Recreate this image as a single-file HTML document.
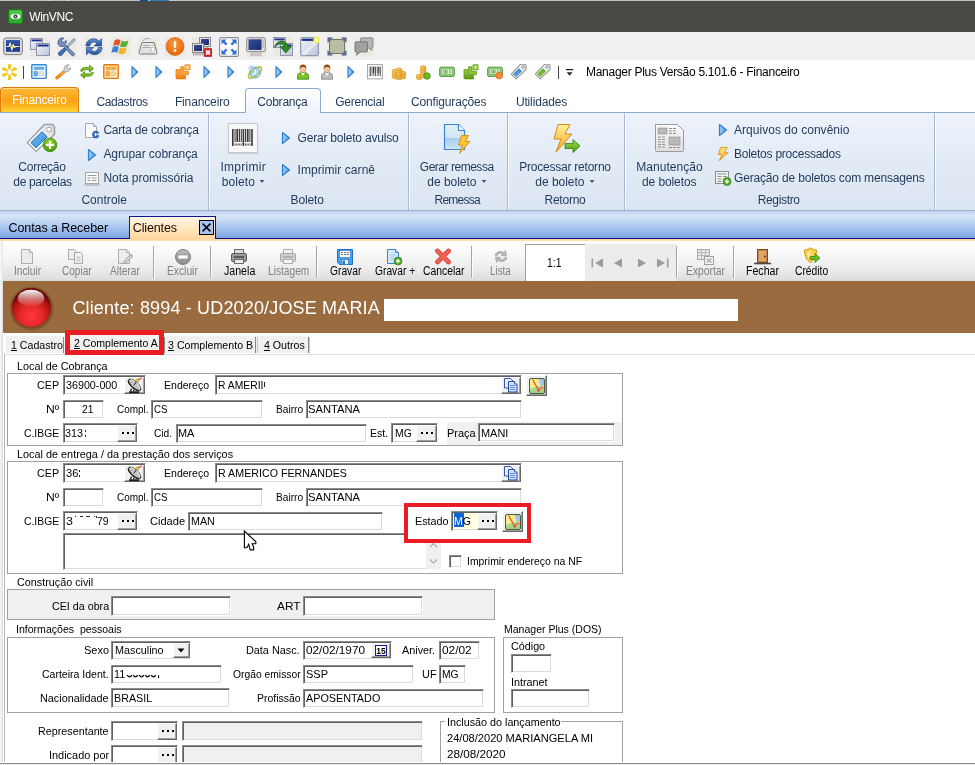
<!DOCTYPE html>
<html><head><meta charset="utf-8"><title>WinVNC</title>
<style>
html,body{margin:0;padding:0;background:#fff;}
body{width:975px;height:765px;overflow:hidden;font-family:"Liberation Sans",sans-serif;}
#root{position:relative;width:975px;height:765px;overflow:hidden;background:transparent;will-change:transform;}
#root div,#root svg{position:absolute;box-sizing:border-box;}
.t{white-space:pre;color:#000;}
.f{font-size:11px;line-height:13px;}
.r{font-size:12px;line-height:14px;color:#1e395b;}
.tb{font-size:11px;line-height:13px;}
.dis{color:#808080;}
.inp{background:#fff;border:1px solid;border-color:#8c8c8c #fff #fff #8c8c8c;box-shadow:inset 1px 1px 0 #5f5f5f, inset -1px -1px 0 #dcdcdc;}
.btn{background:#f0f0f0;border:1px solid;border-color:#fff #696969 #696969 #fff;box-shadow:inset -1px -1px 0 #a0a0a0;}
.grp{border:1px solid #a0a0a0;}

</style></head>
<body>
<div id="root">
<div style="left:0px;top:0px;width:975px;height:32px;background:#4a4946;"></div>
<div style="left:0px;top:0px;width:975px;height:1px;background:#c2c2c2;"></div>
<div style="left:49px;top:0px;width:1px;height:1px;background:#f4f4f4;"></div>
<div style="left:67px;top:0px;width:1px;height:1px;background:#f4f4f4;"></div>
<div style="left:140px;top:0px;width:8px;height:1px;background:#0f4f8f;"></div>
<div style="left:150px;top:0px;width:19px;height:1px;background:#2f7fb4;"></div>
<div class="t " style="left:29.2px;top:9px;letter-spacing:-0.334px;font-size:12px;line-height:16px;color:#fff;">WinVNC</div>
<svg style="left:8px;top:9px;" width="15" height="15" viewBox="0 0 15 15"><rect x="0.5" y="0.5" width="14" height="14" rx="2" fill="#2fae2f" stroke="#1d7a1d"/><rect x="1.5" y="1.5" width="12" height="6" rx="1.5" fill="#5fd35f" opacity=".6"/><ellipse cx="7.5" cy="7.5" rx="5" ry="2.8" fill="#f4f4f4"/><circle cx="7.5" cy="7.5" r="2" fill="#333"/><circle cx="7.5" cy="7.5" r="0.8" fill="#ddd"/></svg>
<div style="left:0px;top:32px;width:975px;height:28px;background:#f0f0f0;"></div>
<svg width="0" height="0" style="left:0;top:0"><defs>
<linearGradient id="vw" x1="0" y1="0" x2="1" y2="1"><stop offset="0" stop-color="#f4f6fb"/><stop offset="1" stop-color="#b9c2d8"/></linearGradient>
<linearGradient id="vs" x1="0" y1="0" x2="1" y2="1"><stop offset="0" stop-color="#3a4f9a"/><stop offset="1" stop-color="#1a2a6a"/></linearGradient>
<linearGradient id="vb" x1="0" y1="0" x2="0" y2="1"><stop offset="0" stop-color="#6590cf"/><stop offset="1" stop-color="#234f9a"/></linearGradient>
<radialGradient id="vo" cx="45%" cy="35%" r="65%"><stop offset="0" stop-color="#ff9a3a"/><stop offset="1" stop-color="#e2650a"/></radialGradient>
</defs></svg>
<div style="left:3px;top:37px;width:20px;height:20px;background:#eceae3;"></div>
<svg style="left:3px;top:37px;" width="20" height="20" viewBox="0 0 20 20"><rect x="0.7" y="1" width="18.6" height="16.6" rx="2.5" fill="#dcdcdc" stroke="#7d7d7d"/><rect x="3" y="3.2" width="14" height="11.6" fill="#1f3f94"/><rect x="3" y="3.2" width="14" height="4" fill="#3a5ab0" opacity=".6"/><path d="M3.5 9.5 H6 L7.2 6 L8.8 13 L10.3 7.5 L11.3 10.5 L12.3 9.5 H16.5" stroke="#f6f2a0" stroke-width="1.2" fill="none" stroke-linejoin="round"/></svg>
<div style="left:30px;top:37px;width:20px;height:20px;background:#eceae3;"></div>
<svg style="left:30px;top:37px;" width="20" height="20" viewBox="0 0 20 20"><rect x="0.5" y="1.5" width="12" height="11" fill="url(#vw)" stroke="#8d96ad"/><rect x="1.5" y="2.5" width="10" height="1.8" fill="#1c2f86"/><rect x="6.5" y="6.5" width="13" height="12" fill="url(#vw)" stroke="#8d96ad"/><rect x="7.5" y="7.5" width="11" height="2" fill="#1c2f86"/></svg>
<div style="left:57px;top:37px;width:20px;height:20px;background:#eceae3;"></div>
<svg style="left:57px;top:37px;" width="20" height="20" viewBox="0 0 20 20"><path d="M16.8 1.5 L18.3 3 L11 10.5 L9.5 9 Z" fill="#aab6cc" stroke="#5a6a8a" stroke-width="0.6"/><path d="M9.8 9 L11.2 10.4 L5 17.8 C4 18.8 2.6 18.8 1.9 18 C1.2 17.2 1.3 16 2.3 15 Z" fill="#3f6fc0" stroke="#1d3f86" stroke-width="0.8"/><path d="M2 2.5 C3.5 0.8 5.8 0.6 6.8 1.2 L4.6 3.4 L5.4 5 L7 5.4 L9 3.4 C9.6 4.6 9.4 6.6 7.8 7.8 L16.8 16 C17.6 16.8 17.6 17.8 17 18.4 C16.4 19 15.4 19 14.6 18.2 L6.2 9.2 C4.6 9.8 2.8 9.4 1.8 8.2 C0.8 7 0.8 4 2 2.5Z" fill="#7a92bc" stroke="#2f4f8f" stroke-width="0.8"/></svg>
<div style="left:84px;top:37px;width:20px;height:20px;background:#eceae3;"></div>
<svg style="left:84px;top:37px;" width="20" height="20" viewBox="0 0 20 20"><path d="M2 9 C2 4.5 6 1.5 10 1.8 C12.3 2 13.8 3 15 4.2 L17.5 1.8 V9 H10.2 L12.8 6.5 C12 5.6 11 5 9.8 5 C7.5 5 6 6.8 5.8 9 Z" fill="url(#vb)" stroke="#1f4a94" stroke-width="0.7"/><path d="M18 10.5 C18 15 14 18 10 17.7 C7.7 17.5 6.2 16.5 5 15.3 L2.5 17.7 V10.5 H9.8 L7.2 13 C8 13.9 9 14.5 10.2 14.5 C12.5 14.5 14 12.7 14.2 10.5 Z" fill="url(#vb)" stroke="#1f4a94" stroke-width="0.7"/></svg>
<div style="left:111px;top:37px;width:20px;height:20px;background:#eceae3;"></div>
<svg style="left:111px;top:37px;" width="20" height="20" viewBox="0 0 20 20"><path d="M3.5 3.5 C5.5 1.8 7.5 2 9.5 3.2 L8 9 C6 7.8 4 7.8 2 9.2 Z" fill="#e2552a"/><path d="M10.5 3.6 C12.5 4.8 15 5 17.5 3.2 L16 9 C13.5 10.6 11 10.4 9 9.4 Z" fill="#5fb03a"/><path d="M1.8 10.2 C3.8 8.8 5.8 8.8 7.8 10 L6.3 15.8 C4.3 14.6 2.3 14.6 0.3 16 Z" fill="#3d82d8"/><path d="M8.8 10.4 C10.8 11.4 13.3 11.6 15.8 10 L14.3 15.8 C11.8 17.6 9.3 17.4 7.3 16.2 Z" fill="#f0b42a"/></svg>
<div style="left:138px;top:37px;width:20px;height:20px;background:#eceae3;"></div>
<svg style="left:138px;top:37px;" width="20" height="20" viewBox="0 0 20 20"><path d="M5 4 C6 1.5 9 0.8 11.5 2" fill="none" stroke="#9a9a9a" stroke-width="0.9"/><path d="M4 5.5 H16 L19 15.5 C19 16.5 18.5 17 17.5 17 H2.5 C1.5 17 1 16.5 1 15.5 Z" fill="#e9e9e9" stroke="#7a7a7a"/><path d="M5 8.5h7M4.5 10.5h8" stroke="#a8a8a8" stroke-width="1.2"/><rect x="4" y="13" width="8" height="2" fill="#f8f8f8" stroke="#b0b0b0" stroke-width="0.5"/><rect x="13.2" y="7.2" width="2.6" height="2" fill="#e8d890"/><rect x="13.5" y="10.5" width="3" height="4.5" fill="#f8f8f8" stroke="#b0b0b0" stroke-width="0.5"/></svg>
<div style="left:165px;top:37px;width:20px;height:20px;background:#eceae3;"></div>
<svg style="left:165px;top:37px;" width="20" height="20" viewBox="0 0 20 20"><circle cx="10" cy="9.5" r="9" fill="url(#vo)" stroke="#d25a08" stroke-width="0.6"/><rect x="8.9" y="4" width="2.2" height="7" rx="1" fill="#fff"/><circle cx="10" cy="13.5" r="1.3" fill="#fff"/></svg>
<div style="left:192px;top:37px;width:20px;height:20px;background:#eceae3;"></div>
<svg style="left:192px;top:37px;" width="20" height="20" viewBox="0 0 20 20"><rect x="7.5" y="0.5" width="11" height="9" fill="#e4e4e4" stroke="#8a8a8a"/><rect x="9" y="2" width="8" height="6" fill="url(#vs)"/><rect x="10" y="10" width="6" height="1.5" fill="#c8c8c8"/><rect x="0.5" y="6.5" width="11" height="9" fill="#e4e4e4" stroke="#8a8a8a"/><rect x="2" y="8" width="8" height="6" fill="url(#vs)"/><rect x="1.5" y="16" width="9" height="2" fill="#d0d0d0" stroke="#8a8a8a" stroke-width="0.5"/><rect x="12" y="11.5" width="8" height="8" rx="1" fill="#d81e1e" stroke="#a01010" stroke-width="0.6"/><path d="M14 13.5l4 4M18 13.5l-4 4" stroke="#fff" stroke-width="1.8"/></svg>
<div style="left:219px;top:37px;width:20px;height:20px;background:#eceae3;"></div>
<svg style="left:219px;top:37px;" width="20" height="20" viewBox="0 0 20 20"><rect x="0.6" y="0.6" width="18.8" height="18.8" rx="1.5" fill="#fbfbfb" stroke="#8c8c8c" stroke-width="1.1"/><g fill="#2f6fd0"><path d="M2.5 2.5h5l-1.7 1.7l2.6 2.6l-1.6 1.6l-2.6-2.6l-1.7 1.7z"/><path d="M17.5 2.5v5l-1.7-1.7l-2.6 2.6l-1.6-1.6l2.6-2.6l-1.7-1.7z"/><path d="M2.5 17.5v-5l1.7 1.7l2.6-2.6l1.6 1.6l-2.6 2.6l1.7 1.7z"/><path d="M17.5 17.5h-5l1.7-1.7l-2.6-2.6l1.6-1.6l2.6 2.6l1.7-1.7z"/></g></svg>
<div style="left:246px;top:37px;width:20px;height:20px;background:#eceae3;"></div>
<svg style="left:246px;top:37px;" width="20" height="20" viewBox="0 0 20 20"><rect x="0.7" y="0.7" width="18.6" height="14" rx="1.5" fill="#e0e0e0" stroke="#8a8a8a"/><rect x="2.5" y="2.3" width="13" height="10.6" fill="url(#vs)"/><path d="M17 3v8" stroke="#aaa"/><path d="M6 15 h8 l1.5 3 h-11z" fill="#d4d4d4" stroke="#9a9a9a" stroke-width="0.6"/><ellipse cx="10" cy="18" rx="5.5" ry="1.3" fill="#c4c4c4"/></svg>
<div style="left:273px;top:37px;width:20px;height:20px;background:#eceae3;"></div>
<svg style="left:273px;top:37px;" width="20" height="20" viewBox="0 0 20 20"><rect x="0.5" y="0.5" width="12" height="10" fill="url(#vw)" stroke="#8d96ad"/><rect x="1.5" y="1.5" width="10" height="1.8" fill="#1c2f86"/><rect x="7.5" y="6.5" width="12" height="12" fill="url(#vw)" stroke="#8d96ad"/><rect x="13.5" y="7.5" width="5" height="1.8" fill="#1c2f86"/><path d="M1.5 10.5 C2.5 5.5 7 3.2 10.5 4.2 C13 5 14.5 7 14.8 9.5 H18.5 L12.8 16 L7 9.5 H10.8 C10.5 8 9.3 7 7.5 7 C5 7 3 8.5 1.5 10.5Z" fill="#2f8a2a" stroke="#1d5f1a" stroke-width="0.7"/></svg>
<div style="left:300px;top:37px;width:20px;height:20px;background:#eceae3;"></div>
<svg style="left:300px;top:37px;" width="20" height="20" viewBox="0 0 20 20"><rect x="0.7" y="0.7" width="17.6" height="18" rx="1" fill="url(#vw)" stroke="#7d8aa8"/><rect x="1.7" y="1.7" width="15.6" height="2.2" fill="#1c2f86"/><path d="M3 18 L16 5" stroke="#fff" stroke-width="3" opacity=".45"/><circle cx="16.5" cy="3" r="3.3" fill="#f8f05a" opacity=".95"/><circle cx="16.5" cy="3" r="1.6" fill="#fffcc0"/></svg>
<div style="left:327px;top:37px;width:20px;height:20px;background:#eceae3;"></div>
<svg style="left:327px;top:37px;" width="20" height="20" viewBox="0 0 20 20"><rect x="2.5" y="2.5" width="15" height="14" rx="2.5" fill="#b9bda4" stroke="#6f7466"/><g fill="#52688f"><path d="M0.5 0.5h5.5l-5.5 5.5z"/><path d="M19.5 0.5v5.5l-5.5-5.5z"/><path d="M0.5 18.5v-5.5l5.5 5.5z"/><path d="M19.5 18.5h-5.5l5.5-5.5z"/></g></svg>
<div style="left:354px;top:37px;width:20px;height:20px;background:#eceae3;"></div>
<svg style="left:354px;top:37px;" width="20" height="20" viewBox="0 0 20 20"><path d="M7.5 0.8 H18 a1 1 0 0 1 1 1 V10 a1 1 0 0 1 -1 1 h-1 l1.2 2.4 l-3.6-2.4 H7.5 a1 1 0 0 1 -1 -1 V1.8 a1 1 0 0 1 1 -1z" fill="#b4b8b4" stroke="#7a7e7a" stroke-width="0.8"/><path d="M2 4.8 H12.5 a1 1 0 0 1 1 1 V14 a1 1 0 0 1 -1 1 H6 l-3.4 3.2 l0.6-3.2 H2 a1 1 0 0 1 -1 -1 V5.8 a1 1 0 0 1 1 -1z" fill="#9ea29e" stroke="#6a6e6a" stroke-width="0.8"/></svg>
<div style="left:0px;top:60px;width:975px;height:28px;background:#fff;"></div>
<svg width="0" height="0" style="left:0;top:0"><defs>
<linearGradient id="qp" x1="0" y1="0" x2="1" y2="0"><stop offset="0" stop-color="#b5dcf8"/><stop offset="1" stop-color="#4a9be2"/></linearGradient>
<linearGradient id="qo" x1="0" y1="0" x2="0" y2="1"><stop offset="0" stop-color="#ffb347"/><stop offset="1" stop-color="#f27c0c"/></linearGradient>
<linearGradient id="qg" x1="0" y1="0" x2="0" y2="1"><stop offset="0" stop-color="#a4d63a"/><stop offset="1" stop-color="#5a9c12"/></linearGradient>
<linearGradient id="qc" x1="0" y1="0" x2="1" y2="0"><stop offset="0" stop-color="#ffd978"/><stop offset="1" stop-color="#f0a428"/></linearGradient>
<linearGradient id="qt" x1="0" y1="0" x2="1" y2="1"><stop offset="0" stop-color="#ffffff"/><stop offset="1" stop-color="#e2e2e2"/></linearGradient>
</defs></svg>
<svg style="left:1px;top:63px;" width="17" height="18" viewBox="0 0 17 18"><g transform="translate(8.5 9)"><path d="M-1 -2.2 L-1.7 -7.6 Q0 -8.6 1.7 -7.6 L1 -2.2 Z" fill="#f4c61a" transform="rotate(0)"/><path d="M-1 -2.2 L-1.7 -7.6 Q0 -8.6 1.7 -7.6 L1 -2.2 Z" fill="#f4c61a" transform="rotate(60)"/><path d="M-1 -2.2 L-1.7 -7.6 Q0 -8.6 1.7 -7.6 L1 -2.2 Z" fill="#f4c61a" transform="rotate(120)"/><path d="M-1 -2.2 L-1.7 -7.6 Q0 -8.6 1.7 -7.6 L1 -2.2 Z" fill="#f4c61a" transform="rotate(180)"/><path d="M-1 -2.2 L-1.7 -7.6 Q0 -8.6 1.7 -7.6 L1 -2.2 Z" fill="#f4c61a" transform="rotate(240)"/><path d="M-1 -2.2 L-1.7 -7.6 Q0 -8.6 1.7 -7.6 L1 -2.2 Z" fill="#f4c61a" transform="rotate(300)"/></g></svg>
<div style="left:23px;top:66px;width:1px;height:13px;background:#444;"></div>
<svg style="left:31px;top:64px;" width="16" height="16" viewBox="0 0 16 16"><rect x="0.8" y="0.8" width="14.4" height="13.6" rx="0.8" fill="#fff" stroke="#2f86d0" stroke-width="1.4"/><rect x="3" y="3" width="10" height="2.6" rx="0.6" fill="#6fb4ee" stroke="#2f86d0" stroke-width="0.5"/><rect x="3" y="7.3" width="3.4" height="4.8" rx="0.5" fill="#6fb4ee" stroke="#2f86d0" stroke-width="0.6"/><rect x="7.8" y="7.8" width="5" height="3.8" rx="0.4" fill="#e6e6e6" stroke="#b8b8b8" stroke-width="0.6"/></svg>
<svg style="left:55px;top:64px;" width="16" height="16" viewBox="0 0 16 16"><path d="M9 6.2 L10.8 8 L3.2 14.6 C2.4 15.3 1.3 15.2 0.9 14.6 C0.4 14 0.5 13 1.2 12.4 Z" fill="url(#qo)" stroke="#d8720c" stroke-width="0.7"/><path d="M9.3 5.8 C8.6 3.8 9.6 1.6 12 0.9 C12.8 0.7 13.6 0.8 14.2 1 L11.8 3 L12.2 4.6 L13.8 5 L15.6 3.2 C15.8 4.6 15.2 6.4 13.6 7.2 C12.8 7.6 11.8 7.6 11.2 7.4 L10.4 8.2 L8.6 6.4 Z" fill="#d6d6d6" stroke="#8c8c8c" stroke-width="0.7"/></svg>
<svg style="left:79px;top:64px;" width="16" height="16" viewBox="0 0 16 16"><path d="M1.5 7 C2 4.2 4.5 3.2 7 3.4 H10.5 V1.2 L14.5 4.6 L10.5 8 V5.8 H7 C5.2 5.8 4 6.2 3.4 7.4 Z" fill="url(#qg)" stroke="#4a8a10" stroke-width="0.7" stroke-linejoin="round"/><path d="M14.5 8.6 C14 11.4 11.5 12.4 9 12.2 H5.5 V14.4 L1.5 11 L5.5 7.6 V9.8 H9 C10.8 9.8 12 9.4 12.6 8.2 Z" fill="url(#qg)" stroke="#4a8a10" stroke-width="0.7" stroke-linejoin="round"/></svg>
<svg style="left:103px;top:64px;" width="16" height="16" viewBox="0 0 16 16"><rect x="0.8" y="0.8" width="14.4" height="13.6" rx="0.8" fill="#fff0c4" stroke="#e8740c" stroke-width="1.4"/><rect x="3" y="3" width="10" height="2.6" rx="0.6" fill="#fbb24a" stroke="#e8740c" stroke-width="0.5"/><rect x="3" y="7.3" width="3.4" height="4.8" rx="0.5" fill="#fbb24a" stroke="#e8740c" stroke-width="0.6"/><rect x="7.8" y="7.8" width="5" height="3.8" rx="0.4" fill="#fdd88a" stroke="#b8b8b8" stroke-width="0.6"/></svg>
<svg style="left:127px;top:64px;" width="16" height="16" viewBox="0 0 16 16"><path d="M5 2.6 L10.6 8 L5 13.4 Z" fill="url(#qp)" stroke="#2f7fd0" stroke-width="1.2" stroke-linejoin="round"/></svg>
<svg style="left:151px;top:64px;" width="16" height="16" viewBox="0 0 16 16"><path d="M5 2.6 L10.6 8 L5 13.4 Z" fill="url(#qp)" stroke="#2f7fd0" stroke-width="1.2" stroke-linejoin="round"/></svg>
<svg style="left:175px;top:64px;" width="16" height="16" viewBox="0 0 16 16"><path d="M1 5.5 h3.6 v6 h6 v3.4 h-8.6 a1 1 0 0 1 -1 -1z" fill="url(#qo)" stroke="#e8740c" stroke-width="0.7"/><path d="M5.6 2.8 h3.2 v4.6 h4.6 v3.2 h-7.8z" fill="#fba33a" stroke="#e8740c" stroke-width="0.7"/><rect x="10" y="0.8" width="5" height="5" fill="#fdc25a" stroke="#e8740c" stroke-width="0.7"/><rect x="11.5" y="2.3" width="2" height="2" fill="#ffe9b0"/></svg>
<svg style="left:199px;top:64px;" width="16" height="16" viewBox="0 0 16 16"><path d="M5 2.6 L10.6 8 L5 13.4 Z" fill="url(#qp)" stroke="#2f7fd0" stroke-width="1.2" stroke-linejoin="round"/></svg>
<svg style="left:223px;top:64px;" width="16" height="16" viewBox="0 0 16 16"><path d="M5 2.6 L10.6 8 L5 13.4 Z" fill="url(#qp)" stroke="#2f7fd0" stroke-width="1.2" stroke-linejoin="round"/></svg>
<svg style="left:247px;top:64px;" width="16" height="16" viewBox="0 0 16 16"><circle cx="8" cy="8.5" r="5.6" fill="#a9d4f6" stroke="#6aa6dc" stroke-width="0.8"/><path d="M4.5 6.5 C6 5 8 5.5 8.5 7 C9 8.5 7.5 10 6 10.5 M9.5 11 C10.5 10 11.5 10.5 11.5 11.5" fill="none" stroke="#fff" stroke-width="1.4"/><ellipse cx="8" cy="8.5" rx="8" ry="3.2" transform="rotate(-38 8 8.5)" fill="none" stroke="#7fb23a" stroke-width="1.3"/><path d="M1 3.5l1.2 1.5M3.2 2l0.6 1.8M5 1.5v1.6" stroke="#5a8ac8" stroke-width="0.7"/><ellipse cx="8" cy="8.5" rx="8" ry="3.2" transform="rotate(-38 8 8.5)" fill="none" stroke="#e8c84a" stroke-width="0.5"/></svg>
<svg style="left:271px;top:64px;" width="16" height="16" viewBox="0 0 16 16"><path d="M5 2.6 L10.6 8 L5 13.4 Z" fill="url(#qp)" stroke="#2f7fd0" stroke-width="1.2" stroke-linejoin="round"/></svg>
<svg style="left:295px;top:64px;" width="16" height="16" viewBox="0 0 16 16"><path d="M2.5 15.2 V11.5 C2.5 9.8 4.5 9 6 8.8 H10 C11.5 9 13.5 9.8 13.5 11.5 V15.2 Z" fill="#7cc22a" stroke="#3f8a12" stroke-width="0.8"/><path d="M6 9 L8 12 L10 9z" fill="#f4f9ea"/><ellipse cx="8" cy="5" rx="3.1" ry="3.6" fill="#f2c59a" stroke="#b07a4a" stroke-width="0.5"/><path d="M4.7 5 C4.3 2 6 0.6 8 0.6 C10 0.6 11.7 2 11.3 5 C10.8 3.6 9.6 3 8 3 C6.4 3 5.2 3.6 4.7 5z" fill="#8a4a1c"/></svg>
<svg style="left:319px;top:64px;" width="16" height="16" viewBox="0 0 16 16"><path d="M2.5 15.2 V11.5 C2.5 9.8 4.5 9 6 8.8 H10 C11.5 9 13.5 9.8 13.5 11.5 V15.2 Z" fill="#bdbdbd" stroke="#7d7d7d" stroke-width="0.8"/><path d="M6 9 L8 12 L10 9z" fill="#f4f4f4"/><ellipse cx="8" cy="5" rx="3.1" ry="3.6" fill="#f2c59a" stroke="#b07a4a" stroke-width="0.5"/><path d="M4.7 5 C4.3 2 6 0.6 8 0.6 C10 0.6 11.7 2 11.3 5 C10.8 3.6 9.6 3 8 3 C6.4 3 5.2 3.6 4.7 5z" fill="#8a4a1c"/></svg>
<svg style="left:343px;top:64px;" width="16" height="16" viewBox="0 0 16 16"><path d="M5 2.6 L10.6 8 L5 13.4 Z" fill="url(#qp)" stroke="#2f7fd0" stroke-width="1.2" stroke-linejoin="round"/></svg>
<svg style="left:367px;top:64px;" width="16" height="16" viewBox="0 0 16 16"><rect x="0.6" y="0.6" width="14.8" height="14.3" fill="#fdfdfd" stroke="#9a9a9a" stroke-width="0.9"/><g fill="#3a3a3a"><rect x="2.6" y="2.6" width="1.1" height="9.6"/><rect x="4.6" y="2.6" width="0.8" height="7"/><rect x="6" y="2.6" width="1.4" height="7"/><rect x="8.2" y="2.6" width="0.8" height="9.6"/><rect x="9.8" y="2.6" width="0.8" height="7"/><rect x="11.2" y="2.6" width="1.2" height="7"/><rect x="12.9" y="2.6" width="0.8" height="9.6"/></g><path d="M4.5 11h3M9.8 11h2.6" stroke="#444" stroke-width="1.6" stroke-dasharray="0.9 0.5"/></svg>
<svg style="left:391px;top:64px;" width="16" height="16" viewBox="0 0 16 16"><ellipse cx="4" cy="13.2" rx="3" ry="1.5" fill="url(#qc)" stroke="#d08a18" stroke-width="0.6"/><ellipse cx="4" cy="11.0" rx="3" ry="1.5" fill="url(#qc)" stroke="#d08a18" stroke-width="0.6"/><ellipse cx="4" cy="8.799999999999999" rx="3" ry="1.5" fill="url(#qc)" stroke="#d08a18" stroke-width="0.6"/><ellipse cx="4" cy="6.599999999999999" rx="3" ry="1.5" fill="url(#qc)" stroke="#d08a18" stroke-width="0.6"/><ellipse cx="11.8" cy="13.2" rx="3" ry="1.5" fill="url(#qc)" stroke="#d08a18" stroke-width="0.6"/><ellipse cx="11.8" cy="11.0" rx="3" ry="1.5" fill="url(#qc)" stroke="#d08a18" stroke-width="0.6"/><ellipse cx="11.8" cy="8.799999999999999" rx="3" ry="1.5" fill="url(#qc)" stroke="#d08a18" stroke-width="0.6"/><ellipse cx="8" cy="14.2" rx="3" ry="1.5" fill="url(#qc)" stroke="#d08a18" stroke-width="0.6"/><ellipse cx="8" cy="12.0" rx="3" ry="1.5" fill="url(#qc)" stroke="#d08a18" stroke-width="0.6"/><ellipse cx="8" cy="9.799999999999999" rx="3" ry="1.5" fill="url(#qc)" stroke="#d08a18" stroke-width="0.6"/><ellipse cx="8" cy="7.599999999999999" rx="3" ry="1.5" fill="url(#qc)" stroke="#d08a18" stroke-width="0.6"/><ellipse cx="8" cy="5.399999999999999" rx="3" ry="1.5" fill="url(#qc)" stroke="#d08a18" stroke-width="0.6"/></svg>
<svg style="left:415px;top:64px;" width="16" height="16" viewBox="0 0 16 16"><ellipse cx="4.2" cy="14.0" rx="3" ry="1.5" fill="url(#qc)" stroke="#d08a18" stroke-width="0.6"/><ellipse cx="4.2" cy="11.8" rx="3" ry="1.5" fill="url(#qc)" stroke="#d08a18" stroke-width="0.6"/><ellipse cx="8" cy="12.0" rx="3" ry="1.5" fill="url(#qc)" stroke="#d08a18" stroke-width="0.6"/><ellipse cx="8" cy="9.8" rx="3" ry="1.5" fill="url(#qc)" stroke="#d08a18" stroke-width="0.6"/><ellipse cx="8" cy="7.6" rx="3" ry="1.5" fill="url(#qc)" stroke="#d08a18" stroke-width="0.6"/><ellipse cx="8" cy="5.3999999999999995" rx="3" ry="1.5" fill="url(#qc)" stroke="#d08a18" stroke-width="0.6"/><ellipse cx="8" cy="3.1999999999999993" rx="3" ry="1.5" fill="url(#qc)" stroke="#d08a18" stroke-width="0.6"/><circle cx="12" cy="12" r="3.3" fill="#6ab81c" stroke="#3f8a12" stroke-width="0.7"/></svg>
<svg style="left:439px;top:64px;" width="16" height="16" viewBox="0 0 16 16"><rect x="0.7" y="3.2" width="14.6" height="9.2" rx="1.2" fill="#9ccf86" stroke="#4f9a3c" stroke-width="1"/><rect x="2.5" y="5" width="11" height="5.6" rx="0.6" fill="#d9efcf" stroke="#5aa448" stroke-width="0.6"/><path d="M5 6v3.6M8 6v3.6M11 6v3.6M6.5 6.3v3" stroke="#4f9a3c" stroke-width="0.9"/></svg>
<svg style="left:463px;top:64px;" width="16" height="16" viewBox="0 0 16 16"><path d="M1 5.5 h3.6 v6 h6 v3.4 h-8.6 a1 1 0 0 1 -1 -1z" fill="url(#qg)" stroke="#4a8a10" stroke-width="0.7"/><path d="M5.6 2.8 h3.2 v4.6 h4.6 v3.2 h-7.8z" fill="#8cc62a" stroke="#4a8a10" stroke-width="0.7"/><rect x="10" y="0.8" width="5" height="5" fill="#a8d84a" stroke="#4a8a10" stroke-width="0.7"/><rect x="11.5" y="2.3" width="2" height="2" fill="#dff0a8"/></svg>
<svg style="left:487px;top:64px;" width="16" height="16" viewBox="0 0 16 16"><rect x="0.7" y="3.2" width="14.6" height="9.2" rx="1.2" fill="#9ccf86" stroke="#4f9a3c" stroke-width="1"/><rect x="2.5" y="5" width="11" height="5.6" rx="0.6" fill="#d9efcf" stroke="#5aa448" stroke-width="0.6"/><path d="M5 6v3.6M8 6v3.6M11 6v3.6M6.5 6.3v3" stroke="#4f9a3c" stroke-width="0.9"/><circle cx="12.2" cy="11.6" r="3.4" fill="#f68a3a" stroke="#d8620c" stroke-width="0.7"/></svg>
<svg style="left:511px;top:64px;" width="16" height="16" viewBox="0 0 16 16"><g transform="translate(-3.7 -3.2) scale(0.54)"><path d="M7.3 24.6 L24.6 6.3 H32.7 L34.6 8.6 V16.2 L16.2 33.4 Z" fill="url(#qt)" stroke="#8f8f8f" stroke-width="1.9" stroke-linejoin="round"/><path d="M21.5 14.8 L26.2 19.4 L16.2 29 L11.6 24.4 Z" fill="#3f8fe0" stroke="#1f5fb0" stroke-width="1.2" stroke-linejoin="round"/><path d="M14 24 l4.5 4.5 M16.5 21.5 l4.5 4.5 M19 19 l4.5 4.5" stroke="#fff" stroke-width="0.7" opacity=".6"/><circle cx="29" cy="11.5" r="2.4" fill="#e8e8e8" stroke="#8a8a8a" stroke-width="1.4"/></g></svg>
<svg style="left:535px;top:64px;" width="16" height="16" viewBox="0 0 16 16"><g transform="translate(-3.7 -3.2) scale(0.54)"><path d="M7.3 24.6 L24.6 6.3 H32.7 L34.6 8.6 V16.2 L16.2 33.4 Z" fill="url(#qt)" stroke="#8f8f8f" stroke-width="1.9" stroke-linejoin="round"/><path d="M21.5 14.8 L26.2 19.4 L16.2 29 L11.6 24.4 Z" fill="#6ab81c" stroke="#3f8a12" stroke-width="1.2" stroke-linejoin="round"/><path d="M14 24 l4.5 4.5 M16.5 21.5 l4.5 4.5 M19 19 l4.5 4.5" stroke="#fff" stroke-width="0.7" opacity=".6"/><circle cx="29" cy="11.5" r="2.4" fill="#e8e8e8" stroke="#8a8a8a" stroke-width="1.4"/></g></svg>
<div style="left:558px;top:66px;width:1px;height:13px;background:#444;"></div>
<svg style="left:565px;top:66px;" width="10" height="11" viewBox="0 0 10 11"><path d="M1 3.6h7.2" stroke="#222" stroke-width="1.3"/><path d="M1.8 6.2h5.6L4.6 9.8z" fill="#222"/></svg>
<div class="t " style="left:586px;top:64.6px;letter-spacing:-0.283px;font-size:12px;line-height:14px;color:#000;">Manager Plus Versão 5.101.6 - Financeiro</div>
<div style="left:0px;top:88px;width:975px;height:25px;background:#fff;"></div>
<div style="left:0px;top:112px;width:975px;height:1px;background:#8eaad0;"></div>
<div style="left:0px;top:87px;width:79px;height:25px;border:1px solid #e07c0c;border-bottom:none;border-radius:4px 4px 0 0;background:linear-gradient(#fdb83a,#f9a314 50%,#fbb01c 70%,#ffd234);box-shadow:inset 0 1px 0 #ffd878, inset 1px 0 0 #fdbb45, inset -1px 0 0 #fdbb45;"></div>
<div class="t r" style="left:12.3px;top:92.6px;letter-spacing:-0.163px;color:#fff;">Financeiro</div>
<div class="t r" style="left:96.4px;top:94.6px;letter-spacing:-0.377px;">Cadastros</div>
<div class="t r" style="left:174.9px;top:94.6px;letter-spacing:-0.133px;">Financeiro</div>
<div class="t r" style="left:335.2px;top:94.6px;letter-spacing:-0.240px;">Gerencial</div>
<div class="t r" style="left:411px;top:94.6px;letter-spacing:-0.152px;">Configurações</div>
<div class="t r" style="left:515.9px;top:94.6px;letter-spacing:-0.149px;">Utilidades</div>
<div style="left:245px;top:88px;width:76px;height:25px;border:1px solid #8eaad0;border-bottom:none;border-radius:4px 4px 0 0;background:linear-gradient(#fdfeff,#eef3fb);"></div>
<div class="t r" style="left:257.3px;top:94.6px;letter-spacing:-0.229px;">Cobrança</div>
<div style="left:0px;top:113px;width:975px;height:97px;background:linear-gradient(#eef3fb,#e4ecf6 40%,#dbe5f1);"></div>
<div style="left:208px;top:113px;width:1px;height:97px;background:#a9bad4;"></div>
<div style="left:209px;top:113px;width:1px;height:97px;background:rgba(255,255,255,.75);"></div>
<div style="left:408px;top:113px;width:1px;height:97px;background:#a9bad4;"></div>
<div style="left:409px;top:113px;width:1px;height:97px;background:rgba(255,255,255,.75);"></div>
<div style="left:507px;top:113px;width:1px;height:97px;background:#a9bad4;"></div>
<div style="left:508px;top:113px;width:1px;height:97px;background:rgba(255,255,255,.75);"></div>
<div style="left:624px;top:113px;width:1px;height:97px;background:#a9bad4;"></div>
<div style="left:625px;top:113px;width:1px;height:97px;background:rgba(255,255,255,.75);"></div>
<div style="left:934px;top:113px;width:1px;height:97px;background:#a9bad4;"></div>
<div style="left:935px;top:113px;width:1px;height:97px;background:rgba(255,255,255,.75);"></div>
<svg style="left:20px;top:118px;" width="44" height="40" viewBox="0 0 44 40"><defs><linearGradient id="tg" x1="0" y1="1" x2="1" y2="0"><stop offset="0" stop-color="#ffffff"/><stop offset="0.6" stop-color="#f0f0f0"/><stop offset="1" stop-color="#cfcfcf"/></linearGradient>
    <linearGradient id="tb1" x1="0" y1="0" x2="1" y2="1"><stop offset="0" stop-color="#6bb6ea"/><stop offset="1" stop-color="#3f94d8"/></linearGradient>
    <radialGradient id="gp" cx="50%" cy="30%" r="75%"><stop offset="0" stop-color="#9ad62a"/><stop offset="1" stop-color="#3f9208"/></radialGradient></defs>
    <path d="M7.3 24.6 L24.6 6.3 H32.7 L34.6 8.6 V16.2 L16.2 33.4 Z" fill="url(#tg)" stroke="#9a9a9a" stroke-width="1.3" stroke-linejoin="round"/>
    <path d="M22 13.8 L27.2 18.8 L15.9 29.8 L11 24.6 Z" fill="url(#tb1)" stroke="#0f6cc4" stroke-width="1" stroke-linejoin="round"/>
    <circle cx="29" cy="11.5" r="2.3" fill="#fff" stroke="#a0a0a0" stroke-width="0.9"/>
    <circle cx="30" cy="26.9" r="6.8" fill="url(#gp)" stroke="#3f8a0a" stroke-width="0.8"/><path d="M30 22.8v8.2M25.9 26.9h8.2" stroke="#fff" stroke-width="2.2"/></svg>
<div class="t r" style="left:18.3px;top:160px;letter-spacing:-0.244px;">Correção</div>
<div class="t r" style="left:13.35px;top:175px;letter-spacing:-0.340px;">de parcelas</div>
<svg style="left:84px;top:123px;" width="17" height="16" viewBox="0 0 17 16"><path d="M1.5 0.5h8l3 3v11h-11z" fill="#fbfbfb" stroke="#a8a8a8"/><path d="M9.5 0.5v3h3" fill="#e8e8e8" stroke="#a8a8a8"/><text x="8" y="15" font-family="Liberation Sans" font-weight="bold" font-size="13" fill="#2a6fd0" stroke="#1a4fa8" stroke-width="0.5">c</text></svg>
<div class="t r" style="left:103.4px;top:122.5px;letter-spacing:-0.207px;">Carta de cobrança</div>
<svg style="left:86.5px;top:147.5px;" width="10" height="14" viewBox="0 0 10 14"><defs><linearGradient id="pg" x1="0" x2="1"><stop offset="0" stop-color="#9fd0f5"/><stop offset="1" stop-color="#4b9be0"/></linearGradient></defs><path d="M1.5 1.5 L8.5 7 L1.5 12.5 Z" fill="url(#pg)" stroke="#2f7fd0" stroke-width="1.2" stroke-linejoin="round"/></svg>
<div class="t r" style="left:103.4px;top:146.7px;letter-spacing:-0.068px;">Agrupar cobrança</div>
<svg style="left:84px;top:171px;" width="16" height="15" viewBox="0 0 16 15"><rect x="1.5" y="1.5" width="13" height="11" fill="#fbfbfb" stroke="#a8a8a8"/><path d="M3.5 4.5h9M3.5 7h3M8 7h4.5M3.5 9.5h3M8 9.5h4.5" stroke="#9a9a9a" stroke-width="1"/><path d="M0.5 14h15" stroke="#9a9a9a" stroke-width="1"/></svg>
<div class="t r" style="left:103.4px;top:171px;letter-spacing:-0.044px;">Nota promissória</div>
<div class="t r" style="left:81.4px;top:192.7px;letter-spacing:0.030px;">Controle</div>
<div style="left:228px;top:123px;width:30px;height:30px;background:#f7f7f7;border:1px solid #c9c9c9;box-shadow:0 1px 1px rgba(0,0,0,.12);"></div>
<svg style="left:228px;top:123px;" width="30" height="30" viewBox="0 0 30 30"><g fill="#3a3a3a"><rect x="4" y="6" width="1.6" height="17"/><rect x="6.6" y="6" width="1" height="13"/><rect x="8.4" y="6" width="1.8" height="13"/><rect x="11" y="6" width="1" height="13"/><rect x="12.8" y="6" width="1" height="13"/><rect x="14.6" y="6" width="1.6" height="17"/><rect x="17" y="6" width="1" height="13"/><rect x="18.8" y="6" width="1.8" height="13"/><rect x="21.4" y="6" width="1" height="13"/><rect x="23.2" y="6" width="1.6" height="17"/></g><path d="M6.5 21.5h7M17 21.5h5.5" stroke="#555" stroke-width="2" stroke-dasharray="1 0.6"/></svg>
<div class="t r" style="left:220.45px;top:160px;letter-spacing:0.272px;">Imprimir</div>
<div class="t r" style="left:221.8px;top:175px;letter-spacing:0.084px;">boleto</div>
<svg style="left:258.5px;top:179px;" width="6" height="5" viewBox="0 0 6 5"><path d="M0.5 1h5L3 4z" fill="#4a5a75"/></svg>
<svg style="left:281px;top:131px;" width="10" height="14" viewBox="0 0 10 14"><defs><linearGradient id="pg" x1="0" x2="1"><stop offset="0" stop-color="#9fd0f5"/><stop offset="1" stop-color="#4b9be0"/></linearGradient></defs><path d="M1.5 1.5 L8.5 7 L1.5 12.5 Z" fill="url(#pg)" stroke="#2f7fd0" stroke-width="1.2" stroke-linejoin="round"/></svg>
<div class="t r" style="left:297.6px;top:130.5px;letter-spacing:-0.207px;">Gerar boleto avulso</div>
<svg style="left:281px;top:163px;" width="10" height="14" viewBox="0 0 10 14"><defs><linearGradient id="pg" x1="0" x2="1"><stop offset="0" stop-color="#9fd0f5"/><stop offset="1" stop-color="#4b9be0"/></linearGradient></defs><path d="M1.5 1.5 L8.5 7 L1.5 12.5 Z" fill="url(#pg)" stroke="#2f7fd0" stroke-width="1.2" stroke-linejoin="round"/></svg>
<div class="t r" style="left:297.6px;top:162.8px;letter-spacing:0.059px;">Imprimir carnê</div>
<div class="t r" style="left:290.5px;top:192.7px;letter-spacing:-0.104px;">Boleto</div>
<svg style="left:441px;top:122.5px;" width="32" height="32" viewBox="0 0 32 32"><defs><linearGradient id="dg" x1="0" y1="0" x2="0" y2="1"><stop offset="0" stop-color="#e6f1fb"/><stop offset="0.55" stop-color="#cfe3f5"/><stop offset="0.56" stop-color="#a6cdee"/><stop offset="1" stop-color="#cfe5f7"/></linearGradient></defs>
    <path d="M3.5 1.5h14l6 6v19h-20z" fill="url(#dg)" stroke="#3a86d4" stroke-width="1.2"/><path d="M17.5 1.5v6h6" fill="#fff" stroke="#3a86d4" stroke-width="1.2"/>
    <path d="M20.5 12.5 H27.5 L24.5 18.5 H29 L18.5 30.5 L21.5 22 H17.5 Z" fill="#f9c535" stroke="#d98a10" stroke-width="0.9" stroke-linejoin="round"/></svg>
<div class="t r" style="left:419.8px;top:160px;letter-spacing:-0.479px;">Gerar remessa</div>
<div class="t r" style="left:427.3px;top:175px;letter-spacing:-0.020px;">de boleto</div>
<svg style="left:481px;top:179px;" width="6" height="5" viewBox="0 0 6 5"><path d="M0.5 1h5L3 4z" fill="#4a5a75"/></svg>
<div class="t r" style="left:434.55px;top:192.7px;letter-spacing:-0.769px;">Remessa</div>
<svg style="left:549.5px;top:122.5px;" width="32" height="32" viewBox="0 0 32 32"><defs><linearGradient id="bg2" x1="0" y1="0" x2="0" y2="1"><stop offset="0" stop-color="#fff0a0"/><stop offset="1" stop-color="#f3a318"/></linearGradient>
    <linearGradient id="ga" x1="0" y1="0" x2="0" y2="1"><stop offset="0" stop-color="#a6e04a"/><stop offset="1" stop-color="#4a9c12"/></linearGradient></defs>
    <path d="M8 1.5 H20 L15 11 H22 L6 29 L11 16 H4 Z" fill="url(#bg2)" stroke="#d98a10" stroke-width="1" stroke-linejoin="round"/>
    <path d="M15 20.5 h8 v-4 l7 6.5 l-7 6.5 v-4 h-8z" fill="url(#ga)" stroke="#3d8a10" stroke-width="0.9" stroke-linejoin="round"/></svg>
<div class="t r" style="left:519.2px;top:160px;letter-spacing:-0.222px;">Processar retorno</div>
<div class="t r" style="left:535.3px;top:175px;letter-spacing:-0.020px;">de boleto</div>
<svg style="left:589px;top:179px;" width="6" height="5" viewBox="0 0 6 5"><path d="M0.5 1h5L3 4z" fill="#4a5a75"/></svg>
<div class="t r" style="left:544.5px;top:192.7px;letter-spacing:-0.242px;">Retorno</div>
<svg style="left:653px;top:123px;" width="33" height="31" viewBox="0 0 33 31"><defs><linearGradient id="ng" x1="0" y1="0" x2="0" y2="1"><stop offset="0" stop-color="#fbfbfb"/><stop offset="1" stop-color="#dedede"/></linearGradient></defs>
    <path d="M2.5 1.5h22l6 6v20a1 1 0 0 1 -1 1h-26a1 1 0 0 1 -1 -1z" fill="url(#ng)" stroke="#9a9a9a"/>
    <rect x="5" y="5" width="9" height="6" fill="#b9b9b9" stroke="#8a8a8a" stroke-width="0.6"/><path d="M16 5.5h7M16 8h7M16 10.5h7M5 14h8M5 16.5h8M5 19h8M5 21.5h8M5 24h8" stroke="#8f8f8f" stroke-width="1.1" stroke-dasharray="3 1"/>
    <rect x="16" y="14" width="11" height="8" fill="#b9b9b9" stroke="#8a8a8a" stroke-width="0.6"/><path d="M16 24.5h11" stroke="#8f8f8f" stroke-width="1.1" stroke-dasharray="3 1"/></svg>
<div class="t r" style="left:636.35px;top:160px;letter-spacing:0.025px;">Manutenção</div>
<div class="t r" style="left:642px;top:175px;letter-spacing:-0.098px;">de boletos</div>
<svg style="left:718px;top:123px;" width="10" height="14" viewBox="0 0 10 14"><defs><linearGradient id="pg" x1="0" x2="1"><stop offset="0" stop-color="#9fd0f5"/><stop offset="1" stop-color="#4b9be0"/></linearGradient></defs><path d="M1.5 1.5 L8.5 7 L1.5 12.5 Z" fill="url(#pg)" stroke="#2f7fd0" stroke-width="1.2" stroke-linejoin="round"/></svg>
<div class="t r" style="left:734px;top:123px;letter-spacing:0.038px;">Arquivos do convênio</div>
<svg style="left:716px;top:146px;" width="15" height="16" viewBox="0 0 16 16"><defs><linearGradient id="bg1" x1="0" y1="0" x2="0" y2="1"><stop offset="0" stop-color="#ffe98a"/><stop offset="1" stop-color="#f5a81c"/></linearGradient></defs><path d="M5 1 H12 L9 6.5 H13 L3.5 15 L6.5 8.5 H2.5 Z" fill="url(#bg1)" stroke="#d98a10" stroke-width="0.8" stroke-linejoin="round"/></svg>
<div class="t r" style="left:734px;top:146.7px;letter-spacing:-0.247px;">Boletos processados</div>
<svg style="left:715px;top:170px;" width="17" height="16" viewBox="0 0 17 16"><rect x="0.5" y="1.5" width="13" height="12" fill="#f2f2f2" stroke="#8f8f8f"/><path d="M2.5 4h9M2.5 6.5h4M2.5 9h4M2.5 11.5h4M8 6.5h4" stroke="#8f8f8f" stroke-width="1.1"/><circle cx="12" cy="11.5" r="4" fill="#4aa81c" stroke="#2f7a10" stroke-width="0.6"/><path d="M12 9.3v4.4M9.8 11.5h4.4" stroke="#fff" stroke-width="1.3"/></svg>
<div class="t r" style="left:734px;top:170.8px;letter-spacing:-0.172px;">Geração de boletos com mensagens</div>
<div class="t r" style="left:757.7px;top:192.7px;letter-spacing:-0.336px;">Registro</div>
<div style="left:0px;top:210px;width:975px;height:1px;background:#a3b3cb;"></div>
<div style="left:0px;top:211px;width:975px;height:27px;background:linear-gradient(#bccfee,#d6e5f8 16%,#c4d9f5 36%,#9dbdec 70%,#7fa5e0);"></div>
<div style="left:0px;top:238px;width:975px;height:1px;background:#14148c;"></div>
<div style="left:0px;top:239px;width:975px;height:2px;background:linear-gradient(#fdd49a,#fde3bb);"></div>
<div style="left:0px;top:241px;width:975px;height:2px;background:#fdfdfd;"></div>
<div class="t " style="left:8.5px;top:221px;letter-spacing:-0.078px;font-size:12.5px;line-height:15px;color:#000;">Contas a Receber</div>
<div style="left:129px;top:216px;width:87px;height:23px;border:1px solid #14148c;border-bottom:none;background:linear-gradient(#fff6e6,#ffe6bd 55%,#fdd69c);"></div>
<div class="t " style="left:132.8px;top:221px;letter-spacing:-0.145px;font-size:12.5px;line-height:15px;color:#1a0a0a;">Clientes</div>
<div style="left:199px;top:220px;width:15px;height:15px;border:1px solid #000;background:#a9c4f0;"></div>
<svg style="left:199px;top:220px;" width="15" height="15" viewBox="0 0 15 15"><path d="M3.6 3.6 L11.4 11.4 M11.4 3.6 L3.6 11.4" stroke="#000" stroke-width="1.5"/></svg>
<div style="left:0px;top:243px;width:975px;height:38px;background:linear-gradient(#fefefe,#f6f6f6 35%,#ebebeb 70%,#dcdcdc);"></div>
<div style="left:0px;top:241px;width:3px;height:40px;background:linear-gradient(90deg,#fafafa,#e4e4e4);"></div>
<div style="left:153px;top:246px;width:1px;height:32px;background:#a6a6a6;"></div>
<div style="left:154px;top:246px;width:1px;height:32px;background:#fcfcfc;"></div>
<div style="left:210px;top:246px;width:1px;height:32px;background:#a6a6a6;"></div>
<div style="left:211px;top:246px;width:1px;height:32px;background:#fcfcfc;"></div>
<div style="left:316px;top:246px;width:1px;height:32px;background:#a6a6a6;"></div>
<div style="left:317px;top:246px;width:1px;height:32px;background:#fcfcfc;"></div>
<div style="left:471px;top:246px;width:1px;height:32px;background:#a6a6a6;"></div>
<div style="left:472px;top:246px;width:1px;height:32px;background:#fcfcfc;"></div>
<div style="left:676px;top:246px;width:1px;height:32px;background:#a6a6a6;"></div>
<div style="left:677px;top:246px;width:1px;height:32px;background:#fcfcfc;"></div>
<div style="left:733px;top:246px;width:1px;height:32px;background:#a6a6a6;"></div>
<div style="left:734px;top:246px;width:1px;height:32px;background:#fcfcfc;"></div>
<svg style="left:19px;top:247.6px;" width="16" height="17" viewBox="0 0 16 17"><path d="M2.5 1.5h8l3 3v11h-11z" fill="#ececec" stroke="#adadad"/><path d="M10.5 1.5v3h3" fill="#e4e4e4" stroke="#b0b0b0"/></svg>
<div class="t tb dis" style="left:13.5px;top:265.1px;font-size:12px;transform:scaleX(0.8466);transform-origin:0 0;">Incluir</div>
<svg style="left:67px;top:247.6px;" width="18" height="17" viewBox="0 0 18 17"><path d="M1.5 1.5h6l2 2v8h-8z" fill="#ececec" stroke="#adadad"/><path d="M7.5 4.5h6l2 2v9h-8z" fill="#f0f0f0" stroke="#a8a8a8"/><path d="M9.5 9h4M9.5 11h4M9.5 13h4" stroke="#c0c0c0"/></svg>
<div class="t tb dis" style="left:61.5px;top:265.1px;font-size:12px;transform:scaleX(0.8373);transform-origin:0 0;">Copiar</div>
<svg style="left:116px;top:247.6px;" width="18" height="17" viewBox="0 0 18 17"><path d="M2.5 1.5h8l3 3v11h-11z" fill="#ececec" stroke="#adadad"/><path d="M10.5 1.5v3h3" fill="#e4e4e4" stroke="#b0b0b0"/><path d="M8 13 L15 6 L17 8 L10 15 L7.5 15.5z" fill="#d0d0d0" stroke="#9a9a9a" stroke-width="0.8"/></svg>
<div class="t tb dis" style="left:110px;top:265.1px;font-size:12px;transform:scaleX(0.8431);transform-origin:0 0;">Alterar</div>
<svg style="left:174px;top:247.6px;" width="18" height="18" viewBox="0 0 18 18"><defs><linearGradient id="exg" x1="0" y1="0" x2="0" y2="1"><stop offset="0" stop-color="#bdbdbd"/><stop offset="1" stop-color="#8a8a8a"/></linearGradient></defs><circle cx="9" cy="9" r="7.5" fill="url(#exg)" stroke="#808080"/><rect x="4" y="7" width="10" height="4" rx="1" fill="#fff" stroke="#8a8a8a" stroke-width="0.6"/></svg>
<div class="t tb dis" style="left:167.4px;top:265.1px;font-size:12px;transform:scaleX(0.8554);transform-origin:0 0;">Excluir</div>
<svg style="left:230px;top:247.6px;" width="18" height="17" viewBox="0 0 18 17"><rect x="4.5" y="1.5" width="9" height="5" fill="#dcdcdc" stroke="#6a6a6a"/><rect x="1.5" y="5.5" width="15" height="8" rx="1.5" fill="#9a9a9a" stroke="#5c5c5c"/><rect x="4" y="8" width="10" height="2" fill="#5a5a5a"/><rect x="4.5" y="11.5" width="9" height="4" fill="#ececec" stroke="#6a6a6a"/></svg>
<div class="t tb" style="left:223.8px;top:265.1px;font-size:12px;transform:scaleX(0.8851);transform-origin:0 0;">Janela</div>
<svg style="left:279px;top:247.6px;" width="18" height="17" viewBox="0 0 18 17"><rect x="4.5" y="1.5" width="9" height="5" fill="#efefef" stroke="#b0b0b0"/><rect x="1.5" y="5.5" width="15" height="8" rx="1.5" fill="#cfcfcf" stroke="#a8a8a8"/><rect x="4" y="8" width="10" height="2" fill="#b0b0b0"/><rect x="4.5" y="11.5" width="9" height="4" fill="#f4f4f4" stroke="#b0b0b0"/></svg>
<div class="t tb dis" style="left:267.6px;top:265.1px;font-size:12px;transform:scaleX(0.8482);transform-origin:0 0;">Listagem</div>
<svg style="left:336px;top:247.6px;" width="18" height="18" viewBox="0 0 18 18"><path d="M1.5 1.5h15v15h-13l-2-2z" fill="#4aa3ee" stroke="#1f70c8"/><rect x="3.5" y="2.5" width="11" height="7" fill="#fafcff" stroke="#1f70c8" stroke-width="0.6"/><path d="M5 4.5h8M5 6.5h8" stroke="#777" stroke-width="1.2" stroke-dasharray="2 1"/><rect x="5.5" y="11.5" width="7" height="5" fill="#e8f0fb" stroke="#1a5fb0" stroke-width="0.6"/><rect x="6.5" y="12.5" width="2.5" height="3.5" fill="#2a78cc"/></svg>
<div class="t tb" style="left:329.6px;top:265.1px;font-size:12px;transform:scaleX(0.8534);transform-origin:0 0;">Gravar</div>
<svg style="left:385px;top:247.6px;" width="18" height="18" viewBox="0 0 18 18"><path d="M2.5 1.5h8l3 3v11h-11z" fill="#d6e8f9" stroke="#3a86d4"/><path d="M10.5 1.5v3h3" fill="#dcebfb" stroke="#3a86d4"/><path d="M4.5 7h6M4.5 9h6M4.5 11h4" stroke="#a9cdf2"/><circle cx="13" cy="13" r="4" fill="#4aa81c" stroke="#2f7a10" stroke-width="0.6"/><path d="M13 10.8v4.4M10.8 13h4.4" stroke="#fff" stroke-width="1.3"/></svg>
<div class="t tb" style="left:374.8px;top:265.1px;font-size:12px;transform:scaleX(0.8550);transform-origin:0 0;">Gravar +</div>
<svg style="left:434px;top:247.6px;" width="18" height="17" viewBox="0 0 18 17"><path d="M3.5 3 L14.5 14 M14.5 3 L3.5 14" stroke="#d63c2c" stroke-width="4.6" stroke-linecap="round"/><path d="M3.5 3 L14.5 14 M14.5 3 L3.5 14" stroke="#f06252" stroke-width="3.2" stroke-linecap="round"/></svg>
<div class="t tb" style="left:422.7px;top:265.1px;font-size:12px;transform:scaleX(0.8641);transform-origin:0 0;">Cancelar</div>
<svg style="left:492px;top:247.6px;" width="18" height="17" viewBox="0 0 18 17"><path d="M3 7 C4 3.5 9 2.5 12 4.5 L13.5 2.5 L14.5 8 L9 7.5 L10.8 5.8 C9 4.8 6 5 5.2 7.5 Z" fill="#b8b8b8" stroke="#9a9a9a" stroke-width="0.6"/><path d="M15 10 C14 13.5 9 14.5 6 12.5 L4.5 14.5 L3.5 9 L9 9.5 L7.2 11.2 C9 12.2 12 12 12.8 9.5 Z" fill="#b8b8b8" stroke="#9a9a9a" stroke-width="0.6"/></svg>
<div class="t tb dis" style="left:490.3px;top:265.1px;font-size:12px;transform:scaleX(0.8166);transform-origin:0 0;">Lista</div>
<div style="left:585px;top:244px;width:91px;height:37px;background:#ececec;"></div>
<div style="left:525px;top:244px;width:60px;height:37px;background:#fff;border-top:1px solid #a0a0a0;border-left:1px solid #a0a0a0;"></div>
<div class="t tb" style="left:547.2px;top:256.6px;font-size:12px;transform:scaleX(0.8632);transform-origin:0 0;">1:1</div>
<svg style="left:591px;top:257px;" width="13" height="12" viewBox="0 0 13 12"><rect x="0.5" y="1.5" width="1.6" height="9" fill="#9c9c9c"/><path d="M12 1.5 L4 6 L12 10.5z" fill="#9c9c9c"/></svg>
<svg style="left:613px;top:257px;" width="10" height="12" viewBox="0 0 10 12"><path d="M9 1.5 L1 6 L9 10.5z" fill="#9c9c9c"/></svg>
<svg style="left:637px;top:257px;" width="10" height="12" viewBox="0 0 10 12"><path d="M1 1.5 L9 6 L1 10.5z" fill="#9c9c9c"/></svg>
<svg style="left:656px;top:257px;" width="13" height="12" viewBox="0 0 13 12"><rect x="10.9" y="1.5" width="1.6" height="9" fill="#9c9c9c"/><path d="M1 1.5 L9 6 L1 10.5z" fill="#9c9c9c"/></svg>
<svg style="left:696px;top:247.6px;" width="19" height="18" viewBox="0 0 19 18"><rect x="1.5" y="1.5" width="12" height="10" fill="#e9e9e9" stroke="#a8a8a8"/><path d="M1.5 4.5h12M1.5 7.5h12M5.5 1.5v10M9.5 1.5v10" stroke="#b8b8b8"/><rect x="8.5" y="8.5" width="9" height="8" fill="#f2f2f2" stroke="#a0a0a0"/><path d="M10.5 10.5l5 4M15.5 10.5l-5 4" stroke="#a8a8a8" stroke-width="1.2"/></svg>
<div class="t tb dis" style="left:686.3px;top:265.1px;font-size:12px;transform:scaleX(0.8599);transform-origin:0 0;">Exportar</div>
<svg style="left:753px;top:247.6px;" width="19" height="18" viewBox="0 0 19 18"><rect x="4.5" y="1.5" width="10" height="13" fill="#c98545" stroke="#7a4a1c"/><rect x="6" y="3" width="7" height="10" fill="#dfa468"/><circle cx="12" cy="8.5" r="0.9" fill="#5a3210"/><path d="M1 15.5h17" stroke="#4a4a4a" stroke-width="1.6"/></svg>
<div class="t tb" style="left:746px;top:265.1px;font-size:12px;transform:scaleX(0.8836);transform-origin:0 0;">Fechar</div>
<svg style="left:802px;top:246.8px;" width="19" height="19" viewBox="0 0 19 19"><path d="M2.5 3 C5 3 7 2 8.5 0.8 C10 2 12 3 14.5 3 C14.5 10 12 13.5 8.5 15.5 C5 13.5 2.5 10 2.5 3z" fill="#f8cf4a" stroke="#d89a18"/><path d="M5 5 C6.5 4.8 7.5 4.2 8.5 3.5 L8.5 13 C6.5 11.5 5 9 5 5z" fill="#fde9a0"/><path d="M8 9.5h5v-3l5 4.5l-5 4.5v-3h-5z" fill="#6ac020" stroke="#3d8a10" stroke-width="0.8" stroke-linejoin="round"/></svg>
<div class="t tb" style="left:795.4px;top:265.1px;font-size:12px;transform:scaleX(0.8556);transform-origin:0 0;">Crédito</div>
<div style="left:0px;top:281px;width:975px;height:52px;background:#996b3e;"></div>
<div style="left:0px;top:281px;width:3px;height:52px;background:linear-gradient(90deg,#fafafa,#dcdcdc);"></div>
<svg style="left:8px;top:284px;" width="48" height="48" viewBox="0 0 48 48"><defs><radialGradient id="rb" cx="50%" cy="72%" r="62%"><stop offset="0" stop-color="#ff3838"/><stop offset="0.45" stop-color="#e62828"/><stop offset="0.8" stop-color="#b01414"/><stop offset="1" stop-color="#6e0606"/></radialGradient>
<linearGradient id="rg" x1="0" y1="0" x2="0" y2="1"><stop offset="0" stop-color="#fff" stop-opacity="0.98"/><stop offset="0.5" stop-color="#fff" stop-opacity="0.45"/><stop offset="1" stop-color="#fff" stop-opacity="0.03"/></linearGradient>
<radialGradient id="rs" cx="50%" cy="50%" r="50%"><stop offset="0.82" stop-color="#3a1a00" stop-opacity="0.45"/><stop offset="1" stop-color="#3a1a00" stop-opacity="0"/></radialGradient></defs>
<circle cx="23.6" cy="24.4" r="23" fill="url(#rs)"/>
<circle cx="23.4" cy="23.6" r="19.5" fill="url(#rb)"/>
<ellipse cx="23" cy="14.2" rx="13.2" ry="8.4" fill="url(#rg)"/></svg>
<div class="t " style="left:72.4px;top:296.6px;letter-spacing:0.162px;font-size:18px;line-height:22px;color:#fff;">Cliente: 8994 - UD2020/JOSE MARIA</div>
<div style="left:384px;top:299px;width:354px;height:22px;background:#fff;"></div>
<div style="left:0px;top:333px;width:975px;height:432px;background:#fff;"></div>
<div style="left:0px;top:333px;width:3px;height:432px;background:linear-gradient(90deg,#fafafa,#dcdcdc);"></div>
<div style="left:4px;top:354px;width:971px;height:1px;background:#dedede;"></div>
<div style="left:4px;top:354px;width:1px;height:409px;background:#b9b9b9;"></div>
<div style="left:6px;top:336px;width:304px;height:17px;background:#f0f0f0;"></div>
<div class="t f" style="left:10.6px;top:338.8px;font-size:11.5px;transform:scaleX(0.9226);transform-origin:0 0;"><u>1</u> Cadastro</div>
<div style="left:63px;top:337px;width:1px;height:16px;background:#8a8a8a;"></div>
<div style="left:65px;top:330px;width:99px;height:25px;border:5px solid #ea1c24;background:#f0f0f0;"></div>
<div class="t f" style="left:73.8px;top:336.8px;font-size:11.5px;transform:scaleX(0.9156);transform-origin:0 0;"><u>2</u> Complemento A</div>
<div style="left:164px;top:337px;width:1px;height:16px;background:#8a8a8a;"></div>
<div class="t f" style="left:167.9px;top:338.8px;font-size:11.5px;transform:scaleX(0.9245);transform-origin:0 0;"><u>3</u> Complemento B</div>
<div style="left:255px;top:337px;width:1px;height:16px;background:#8a8a8a;"></div>
<div style="left:257px;top:337px;width:1px;height:16px;background:#c8c8c8;"></div>
<div class="t f" style="left:263.8px;top:338.8px;font-size:11.5px;transform:scaleX(0.9229);transform-origin:0 0;"><u>4</u> Outros</div>
<div style="left:308px;top:337px;width:1px;height:16px;background:#8a8a8a;"></div>
<div style="left:309px;top:337px;width:1px;height:16px;background:#c8c8c8;"></div>
<div class="t f" style="left:16.9px;top:359.8px;font-size:11.5px;transform:scaleX(0.9385);transform-origin:0 0;">Local de Cobrança</div>
<div class="grp" style="left:7px;top:373px;width:616px;height:73px;"></div>
<div class="t f" style="left:36.9px;top:378.8px;font-size:11.5px;transform:scaleX(0.9346);transform-origin:0 0;">CEP</div>
<div class="inp" style="left:63px;top:375px;width:83px;height:20px;background:#fff;"></div>
<div class="t f" style="left:66.2px;top:378.8px;font-size:11.5px;transform:scaleX(0.9328);transform-origin:0 0;">36900-000</div>
<div class="btn" style="left:124px;top:377px;width:21px;height:17px;"></div>
<svg style="left:124px;top:377px;" width="21" height="17" viewBox="0 0 21 17"><g transform="rotate(42 10.5 8)"><ellipse cx="10.5" cy="8" rx="8" ry="3.4" fill="#c4c4c4" stroke="#1a1a1a" stroke-width="0.9"/><path d="M3.5 9.2 C7 11.5 14 11.5 17.5 9.2" fill="none" stroke="#1a1a1a" stroke-width="1.1"/><path d="M4 6.5 C8 5 13 5 17 6.5" fill="none" stroke="#e8e8e8" stroke-width="1"/></g><path d="M9.8 8.2 L13 4.2" stroke="#222" stroke-width="1"/><circle cx="13.3" cy="3.6" r="1.5" fill="#f6ea20" stroke="#5a5a20" stroke-width="0.5"/><path d="M14.3 2.8 L18 0.6" stroke="#f03030" stroke-width="1.1"/><path d="M7.5 11.5 L6.5 14.5 M9.5 12.5 L10 14.5" stroke="#222" stroke-width="1.3"/><path d="M5 15.2h10" stroke="#1a1a1a" stroke-width="1.8"/></svg>
<div class="t f" style="left:164.4px;top:378.8px;font-size:11.5px;transform:scaleX(0.9161);transform-origin:0 0;">Endereço</div>
<div class="inp" style="left:215px;top:375px;width:307px;height:20px;background:#fff;"></div>
<div class="t f" style="left:217.9px;top:378.8px;font-size:11.5px;transform:scaleX(0.8993);transform-origin:0 0;">R AMERII</div>
<div style="left:264px;top:382px;width:1.1px;height:5.4px;background:#222;"></div>
<div class="btn" style="left:501px;top:377px;width:20px;height:17px;"></div>
<svg style="left:503px;top:377px;" width="16" height="16" viewBox="0 0 16 16"><path d="M1.5 1.5h6l2.5 2.5v7h-8.5z" fill="#e6ecf8" stroke="#3b55a0"/><path d="M5.5 4.5h6l2.5 2.5v8h-8.5z" fill="#cfe2fa" stroke="#2a4595"/><path d="M11.5 4.5v2.5h2.5" fill="#fff" stroke="#2a4595" stroke-width="0.8"/><path d="M7 8.5h5M7 10.5h5M7 12.5h5" stroke="#5d93e0" stroke-width="1.1"/></svg>
<div class="btn" style="left:526px;top:375px;width:21px;height:21px;"></div>
<svg style="left:528.5px;top:377.5px;" width="16" height="16" viewBox="0 0 16 16"><defs><clipPath id="mc"><rect x="1" y="1" width="14" height="14" rx="1"/></clipPath></defs><g clip-path="url(#mc)"><rect x="0" y="0" width="16" height="16" fill="#8ecb6c"/><path d="M0 0 H9.5 L11.5 8 L5 9.2 L0 11.5 Z" fill="#f0ec6e"/><path d="M9.5 0 H16 V7 L11.5 8 Z" fill="#8db6ea"/><path d="M11.5 8 L16 7 V10 L12.5 10.5z" fill="#d8e070"/><path d="M1 2.5h14M1 4h14M1 5.5h14M1 7h14M1 8.5h14M1 10h14M1 11.5h14M1 13h14M2.5 1v14M4 1v14M5.5 1v14M7 1v14M8.5 1v14M10 1v14M11.5 1v14M13 1v14" stroke="#fff" stroke-width="0.35" opacity=".55"/><path d="M3.9 2 L10.4 13.8 M8.4 12.6 L13.9 9" stroke="#f0483a" stroke-width="1.3" fill="none" stroke-linecap="round"/></g><rect x="0.5" y="0.5" width="15" height="15" rx="1.5" fill="none" stroke="#4d5c44" stroke-width="1"/></svg>
<div class="t f" style="left:46.4px;top:402.8px;font-size:11.5px;transform:scaleX(1.0476);transform-origin:0 0;">Nº</div>
<div class="inp" style="left:63px;top:400px;width:41px;height:19px;background:#fff;"></div>
<div class="t f" style="left:82.1px;top:402.8px;font-size:11.5px;transform:scaleX(0.8912);transform-origin:0 0;">21</div>
<div class="t f" style="left:116.7px;top:402.8px;font-size:11.5px;transform:scaleX(0.8675);transform-origin:0 0;">Compl.</div>
<div class="inp" style="left:151px;top:400px;width:112px;height:19px;background:#fff;"></div>
<div class="t f" style="left:154.3px;top:402.8px;font-size:11.5px;transform:scaleX(0.8388);transform-origin:0 0;">CS</div>
<div class="t f" style="left:276.4px;top:402.8px;font-size:11.5px;transform:scaleX(0.8834);transform-origin:0 0;">Bairro</div>
<div class="inp" style="left:306px;top:400px;width:216px;height:19px;background:#fff;"></div>
<div class="t f" style="left:308.4px;top:402.8px;font-size:11.5px;transform:scaleX(0.9745);transform-origin:0 0;">SANTANA</div>
<div style="left:447px;top:422px;width:175px;height:23px;background:#f0f0f0;"></div>
<div class="t f" style="left:23.9px;top:426.8px;font-size:11.5px;transform:scaleX(0.9004);transform-origin:0 0;">C.IBGE</div>
<div class="inp" style="left:63px;top:423px;width:75px;height:20px;background:#fff;"></div>
<div class="t f" style="left:65.4px;top:426.8px;font-size:11.5px;transform:scaleX(0.9433);transform-origin:0 0;">313</div>
<div style="left:84.8px;top:430px;width:1.2px;height:2px;background:#222;"></div>
<div style="left:84.8px;top:435px;width:1.2px;height:2px;background:#222;"></div>
<div class="btn" style="left:117px;top:425px;width:20px;height:17px;"></div>
<div style="left:121.6px;top:432px;width:2.2px;height:2.2px;background:#000;"></div>
<div style="left:126.69999999999999px;top:432px;width:2.2px;height:2.2px;background:#000;"></div>
<div style="left:131.79999999999998px;top:432px;width:2.2px;height:2.2px;background:#000;"></div>
<div class="t f" style="left:154.4px;top:426.8px;font-size:11.5px;transform:scaleX(0.8850);transform-origin:0 0;">Cid.</div>
<div class="inp" style="left:176px;top:424px;width:191px;height:19px;background:#fff;"></div>
<div class="t f" style="left:177.9px;top:426.8px;font-size:11.5px;transform:scaleX(0.9507);transform-origin:0 0;">MA</div>
<div class="t f" style="left:370.4px;top:426.8px;font-size:11.5px;transform:scaleX(0.9137);transform-origin:0 0;">Est.</div>
<div class="inp" style="left:391px;top:423px;width:47px;height:20px;background:#fff;"></div>
<div class="t f" style="left:394.6px;top:426.8px;font-size:11.5px;transform:scaleX(0.9015);transform-origin:0 0;">MG</div>
<div class="btn" style="left:416px;top:425px;width:21px;height:17px;"></div>
<div style="left:420.6px;top:432px;width:2.2px;height:2.2px;background:#000;"></div>
<div style="left:425.70000000000005px;top:432px;width:2.2px;height:2.2px;background:#000;"></div>
<div style="left:430.8px;top:432px;width:2.2px;height:2.2px;background:#000;"></div>
<div class="t f" style="left:446.9px;top:426.8px;font-size:11.5px;transform:scaleX(0.9520);transform-origin:0 0;">Praça</div>
<div class="inp" style="left:478px;top:423px;width:137px;height:19px;background:#fff;"></div>
<div class="t f" style="left:480.7px;top:426.8px;font-size:11.5px;transform:scaleX(0.9495);transform-origin:0 0;">MANI</div>
<div class="t f" style="left:16.9px;top:447.8px;font-size:11.5px;transform:scaleX(0.9442);transform-origin:0 0;">Local de entrega / da prestação dos serviços</div>
<div class="grp" style="left:7px;top:461px;width:616px;height:113px;"></div>
<div class="t f" style="left:36.9px;top:466.8px;font-size:11.5px;transform:scaleX(0.9346);transform-origin:0 0;">CEP</div>
<div class="inp" style="left:63px;top:463px;width:83px;height:20px;background:#fff;"></div>
<div class="t f" style="left:66.4px;top:466.8px;font-size:11.5px;transform:scaleX(0.9694);transform-origin:0 0;">36</div>
<div style="left:79px;top:470px;width:1.2px;height:2px;background:#222;"></div>
<div style="left:79px;top:475px;width:1.2px;height:2px;background:#222;"></div>
<div class="btn" style="left:124px;top:465px;width:21px;height:17px;"></div>
<svg style="left:124px;top:465px;" width="21" height="17" viewBox="0 0 21 17"><g transform="rotate(42 10.5 8)"><ellipse cx="10.5" cy="8" rx="8" ry="3.4" fill="#c4c4c4" stroke="#1a1a1a" stroke-width="0.9"/><path d="M3.5 9.2 C7 11.5 14 11.5 17.5 9.2" fill="none" stroke="#1a1a1a" stroke-width="1.1"/><path d="M4 6.5 C8 5 13 5 17 6.5" fill="none" stroke="#e8e8e8" stroke-width="1"/></g><path d="M9.8 8.2 L13 4.2" stroke="#222" stroke-width="1"/><circle cx="13.3" cy="3.6" r="1.5" fill="#f6ea20" stroke="#5a5a20" stroke-width="0.5"/><path d="M14.3 2.8 L18 0.6" stroke="#f03030" stroke-width="1.1"/><path d="M7.5 11.5 L6.5 14.5 M9.5 12.5 L10 14.5" stroke="#222" stroke-width="1.3"/><path d="M5 15.2h10" stroke="#1a1a1a" stroke-width="1.8"/></svg>
<div class="t f" style="left:164.4px;top:466.8px;font-size:11.5px;transform:scaleX(0.9161);transform-origin:0 0;">Endereço</div>
<div class="inp" style="left:215px;top:463px;width:307px;height:20px;background:#fff;"></div>
<div class="t f" style="left:218px;top:466.8px;font-size:11.5px;transform:scaleX(0.9296);transform-origin:0 0;">R AMERICO FERNANDES</div>
<div class="btn" style="left:501px;top:465px;width:20px;height:17px;"></div>
<svg style="left:503px;top:465px;" width="16" height="16" viewBox="0 0 16 16"><path d="M1.5 1.5h6l2.5 2.5v7h-8.5z" fill="#e6ecf8" stroke="#3b55a0"/><path d="M5.5 4.5h6l2.5 2.5v8h-8.5z" fill="#cfe2fa" stroke="#2a4595"/><path d="M11.5 4.5v2.5h2.5" fill="#fff" stroke="#2a4595" stroke-width="0.8"/><path d="M7 8.5h5M7 10.5h5M7 12.5h5" stroke="#5d93e0" stroke-width="1.1"/></svg>
<div class="t f" style="left:46.4px;top:490.8px;font-size:11.5px;transform:scaleX(1.0476);transform-origin:0 0;">Nº</div>
<div class="inp" style="left:63px;top:488px;width:41px;height:19px;background:#fff;"></div>
<div class="t f" style="left:116.7px;top:490.8px;font-size:11.5px;transform:scaleX(0.8675);transform-origin:0 0;">Compl.</div>
<div class="inp" style="left:151px;top:488px;width:112px;height:19px;background:#fff;"></div>
<div class="t f" style="left:154.3px;top:490.8px;font-size:11.5px;transform:scaleX(0.8388);transform-origin:0 0;">CS</div>
<div class="t f" style="left:276.4px;top:490.8px;font-size:11.5px;transform:scaleX(0.8834);transform-origin:0 0;">Bairro</div>
<div class="inp" style="left:306px;top:488px;width:216px;height:19px;background:#fff;"></div>
<div class="t f" style="left:308.4px;top:490.8px;font-size:11.5px;transform:scaleX(0.9745);transform-origin:0 0;">SANTANA</div>
<div class="t f" style="left:23.9px;top:514.8px;font-size:11.5px;transform:scaleX(0.9004);transform-origin:0 0;">C.IBGE</div>
<div class="inp" style="left:63px;top:511px;width:75px;height:20px;background:#fff;"></div>
<div class="t f" style="left:66.2px;top:514.8px;font-size:11.5px;transform:scaleX(1.0788);transform-origin:0 0;">3</div>
<div class="btn" style="left:117px;top:513px;width:20px;height:17px;"></div>
<div style="left:121.6px;top:520px;width:2.2px;height:2.2px;background:#000;"></div>
<div style="left:126.69999999999999px;top:520px;width:2.2px;height:2.2px;background:#000;"></div>
<div style="left:131.79999999999998px;top:520px;width:2.2px;height:2.2px;background:#000;"></div>
<div style="left:75px;top:516px;width:1.2px;height:1.2px;background:#222;"></div>
<div style="left:79.5px;top:516px;width:3.6px;height:1px;background:#222;"></div>
<div style="left:86px;top:516px;width:3.6px;height:1px;background:#222;"></div>
<div style="left:94.3px;top:516px;width:1.2px;height:1.2px;background:#222;"></div>
<div style="left:96.4px;top:516px;width:1px;height:2.2px;background:#222;"></div>
<div class="t f" style="left:97.4px;top:514.8px;font-size:11.5px;transform:scaleX(0.9146);transform-origin:0 0;">79</div>
<div class="t f" style="left:150.4px;top:514.8px;font-size:11.5px;transform:scaleX(0.9631);transform-origin:0 0;">Cidade</div>
<div class="inp" style="left:188px;top:512px;width:195px;height:19px;background:#fff;"></div>
<div class="t f" style="left:190.9px;top:514.8px;font-size:11.5px;transform:scaleX(0.9313);transform-origin:0 0;">MAN</div>
<div class="inp" style="left:63px;top:533px;width:379px;height:37px;background:#fff;"></div>
<div style="left:426px;top:536px;width:15px;height:33px;background:#f0f0f0;"></div>
<svg style="left:426px;top:536px;" width="15" height="33" viewBox="0 0 15 33"><path d="M4 11 L7.5 7.5 L11 11" fill="none" stroke="#a8a8a8" stroke-width="1.1"/><path d="M4 23.5 L7.5 27 L11 23.5" fill="none" stroke="#a8a8a8" stroke-width="1.1"/></svg>
<div style="left:404px;top:503px;width:127px;height:40px;border:4px solid #ea1c24;background:#fff;"></div>
<div class="t f" style="left:414.9px;top:514.8px;font-size:11.5px;transform:scaleX(0.9385);transform-origin:0 0;">Estado</div>
<div class="inp" style="left:451px;top:511px;width:47px;height:20px;background:#ffffe1;"></div>
<div style="left:454px;top:513px;width:10px;height:14px;background:#0a64d8;"></div>
<div class="t f" style="left:454.4px;top:514.8px;font-size:11.5px;transform:scaleX(0.9123);transform-origin:0 0;"><span style="color:#fff">M</span>G</div>
<div class="btn" style="left:477px;top:513px;width:20px;height:17px;"></div>
<div style="left:481.6px;top:520px;width:2.2px;height:2.2px;background:#000;"></div>
<div style="left:486.70000000000005px;top:520px;width:2.2px;height:2.2px;background:#000;"></div>
<div style="left:491.8px;top:520px;width:2.2px;height:2.2px;background:#000;"></div>
<div class="btn" style="left:502px;top:511px;width:21px;height:21px;"></div>
<svg style="left:504.5px;top:513.5px;" width="16" height="16" viewBox="0 0 16 16"><defs><clipPath id="mc"><rect x="1" y="1" width="14" height="14" rx="1"/></clipPath></defs><g clip-path="url(#mc)"><rect x="0" y="0" width="16" height="16" fill="#8ecb6c"/><path d="M0 0 H9.5 L11.5 8 L5 9.2 L0 11.5 Z" fill="#f0ec6e"/><path d="M9.5 0 H16 V7 L11.5 8 Z" fill="#8db6ea"/><path d="M11.5 8 L16 7 V10 L12.5 10.5z" fill="#d8e070"/><path d="M1 2.5h14M1 4h14M1 5.5h14M1 7h14M1 8.5h14M1 10h14M1 11.5h14M1 13h14M2.5 1v14M4 1v14M5.5 1v14M7 1v14M8.5 1v14M10 1v14M11.5 1v14M13 1v14" stroke="#fff" stroke-width="0.35" opacity=".55"/><path d="M3.9 2 L10.4 13.8 M8.4 12.6 L13.9 9" stroke="#f0483a" stroke-width="1.3" fill="none" stroke-linecap="round"/></g><rect x="0.5" y="0.5" width="15" height="15" rx="1.5" fill="none" stroke="#4d5c44" stroke-width="1"/></svg>
<div class="inp" style="left:449px;top:555px;width:13px;height:13px;background:#fff;"></div>
<div class="t f" style="left:466.9px;top:554.8px;font-size:11.5px;transform:scaleX(0.9050);transform-origin:0 0;">Imprimir endereço na NF</div>
<svg style="left:243px;top:530px;" width="14" height="22" viewBox="0 0 14 22"><path d="M1.4 1.1 L1.4 17.7 L3.9 17.7 L5.7 14.3 L7.2 19.9 L10.6 19.9 L10.6 17.1 L9.1 13.7 L12.8 13.7 L12.8 11.6 Z" fill="#fff" stroke="#0a0000" stroke-width="1.15" stroke-linejoin="miter"/></svg>
<div class="t f" style="left:16.6px;top:575.8px;font-size:11.5px;transform:scaleX(0.9375);transform-origin:0 0;">Construção civil</div>
<div class="grp" style="left:7px;top:589px;width:488px;height:31px;background:#f0f0f0;"></div>
<div class="t f" style="left:51.7px;top:599.8px;font-size:11.5px;transform:scaleX(0.9304);transform-origin:0 0;">CEI da obra</div>
<div class="inp" style="left:111px;top:596px;width:120px;height:20px;background:#fff;"></div>
<div class="t f" style="left:277px;top:599.8px;font-size:11.5px;transform:scaleX(1.0354);transform-origin:0 0;">ART</div>
<div class="inp" style="left:303px;top:596px;width:120px;height:20px;background:#fff;"></div>
<div class="t f" style="left:15.9px;top:622.8px;font-size:11.5px;transform:scaleX(0.9178);transform-origin:0 0;">Informações  pessoais</div>
<div class="grp" style="left:7px;top:637px;width:488px;height:76px;"></div>
<div class="t f" style="left:83.7px;top:643.8px;font-size:11.5px;transform:scaleX(0.9575);transform-origin:0 0;">Sexo</div>
<div class="inp" style="left:111px;top:641px;width:80px;height:19px;background:#fff;"></div>
<div class="t f" style="left:115.1px;top:643.8px;font-size:11.5px;transform:scaleX(0.9387);transform-origin:0 0;">Masculino</div>
<div class="btn" style="left:173px;top:643px;width:17px;height:15px;"></div>
<svg style="left:173px;top:643px;" width="17" height="15" viewBox="0 0 17 15"><path d="M4.5 5.5h7L8 9.5z" fill="#000"/></svg>
<div class="t f" style="left:246.1px;top:643.8px;font-size:11.5px;transform:scaleX(0.9423);transform-origin:0 0;">Data Nasc.</div>
<div class="inp" style="left:303px;top:641px;width:89px;height:19px;background:#fff;"></div>
<div class="t f" style="left:305.7px;top:643.8px;font-size:11.5px;transform:scaleX(1.0251);transform-origin:0 0;">02/02/1970</div>
<div class="btn" style="left:371px;top:643px;width:20px;height:15px;"></div>
<svg style="left:371px;top:643px;" width="20" height="15" viewBox="0 0 20 15"><rect x="4.5" y="2.5" width="11" height="10" fill="#fff" stroke="#1a1a8a"/><text x="10" y="10.5" font-size="8.5" font-family="Liberation Sans" text-anchor="middle" fill="#000" font-weight="bold">15</text></svg>
<div class="t f" style="left:402.4px;top:643.8px;font-size:11.5px;transform:scaleX(0.9414);transform-origin:0 0;">Aniver.</div>
<div class="inp" style="left:439px;top:641px;width:41px;height:19px;background:#fff;"></div>
<div class="t f" style="left:442.2px;top:643.8px;font-size:11.5px;transform:scaleX(1.0320);transform-origin:0 0;">02/02</div>
<div class="t f" style="left:42.2px;top:667.8px;font-size:11.5px;transform:scaleX(0.9140);transform-origin:0 0;">Carteira Ident.</div>
<div class="inp" style="left:111px;top:665px;width:111px;height:19px;background:#fff;"></div>
<div class="t f" style="left:114.1px;top:667.8px;font-size:11.5px;transform:scaleX(0.9465);transform-origin:0 0;">11</div>
<svg style="left:126px;top:673px;" width="36" height="6" viewBox="0 0 36 6"><path d="M1.2 2.2 Q3.5 5.6 5.8 2.2 M7.2 2.2 Q9.5 5.6 11.8 2.2 M13.2 2.2 Q15.5 5.6 17.8 2.2 M19.2 2.2 Q21.5 5.6 23.8 2.2 M25.2 2.2 Q27.5 5.6 29.8 2.2" fill="none" stroke="#000" stroke-width="1.25"/><path d="M32.5 2.3v2.8" stroke="#000" stroke-width="1.2"/></svg>
<div class="t f" style="left:233.1px;top:667.8px;font-size:11.5px;transform:scaleX(0.8964);transform-origin:0 0;">Orgão emissor</div>
<div class="inp" style="left:303px;top:665px;width:111px;height:19px;background:#fff;"></div>
<div class="t f" style="left:305.7px;top:667.8px;font-size:11.5px;transform:scaleX(0.9603);transform-origin:0 0;">SSP</div>
<div class="t f" style="left:422.2px;top:667.8px;font-size:11.5px;transform:scaleX(0.9524);transform-origin:0 0;">UF</div>
<div class="inp" style="left:439px;top:665px;width:27px;height:19px;background:#fff;"></div>
<div class="t f" style="left:442.2px;top:667.8px;font-size:11.5px;transform:scaleX(0.8961);transform-origin:0 0;">MG</div>
<div class="t f" style="left:40.2px;top:691.8px;font-size:11.5px;transform:scaleX(0.9412);transform-origin:0 0;">Nacionalidade</div>
<div class="inp" style="left:111px;top:688px;width:119px;height:20px;background:#fff;"></div>
<div class="t f" style="left:114.4px;top:691.8px;font-size:11.5px;transform:scaleX(0.9313);transform-origin:0 0;">BRASIL</div>
<div class="t f" style="left:257px;top:691.8px;font-size:11.5px;transform:scaleX(0.9095);transform-origin:0 0;">Profissão</div>
<div class="inp" style="left:303px;top:689px;width:181px;height:19px;background:#fff;"></div>
<div class="t f" style="left:305.7px;top:691.8px;font-size:11.5px;transform:scaleX(0.9402);transform-origin:0 0;">APOSENTADO</div>
<div class="t f" style="left:504px;top:622.8px;font-size:11.5px;transform:scaleX(0.9144);transform-origin:0 0;">Manager Plus (DOS)</div>
<div class="grp" style="left:503px;top:637px;width:120px;height:76px;"></div>
<div class="t f" style="left:511.1px;top:639.8px;font-size:11.5px;transform:scaleX(0.9357);transform-origin:0 0;">Código</div>
<div class="inp" style="left:511px;top:654px;width:41px;height:19px;background:#fff;"></div>
<div class="t f" style="left:511.1px;top:675.8px;font-size:11.5px;transform:scaleX(0.9385);transform-origin:0 0;">Intranet</div>
<div class="inp" style="left:511px;top:689px;width:79px;height:19px;background:#fff;"></div>
<div class="t f" style="left:38.2px;top:724.8px;font-size:11.5px;transform:scaleX(0.9358);transform-origin:0 0;">Representante</div>
<div class="inp" style="left:111px;top:721px;width:67px;height:20px;background:#fff;"></div>
<div class="btn" style="left:157px;top:723px;width:20px;height:17px;"></div>
<div style="left:161.6px;top:730px;width:2.2px;height:2.2px;background:#000;"></div>
<div style="left:166.7px;top:730px;width:2.2px;height:2.2px;background:#000;"></div>
<div style="left:171.79999999999998px;top:730px;width:2.2px;height:2.2px;background:#000;"></div>
<div class="inp" style="left:182px;top:721px;width:241px;height:20px;background:#f0f0f0;"></div>
<div class="t f" style="left:48.7px;top:748.8px;font-size:11.5px;transform:scaleX(0.9495);transform-origin:0 0;">Indicado por</div>
<div class="inp" style="left:111px;top:745px;width:67px;height:20px;background:#fff;"></div>
<div class="btn" style="left:157px;top:747px;width:20px;height:17px;"></div>
<div style="left:161.6px;top:754px;width:2.2px;height:2.2px;background:#000;"></div>
<div style="left:166.7px;top:754px;width:2.2px;height:2.2px;background:#000;"></div>
<div style="left:171.79999999999998px;top:754px;width:2.2px;height:2.2px;background:#000;"></div>
<div class="inp" style="left:182px;top:745px;width:241px;height:20px;background:#f0f0f0;"></div>
<div class="grp" style="left:440px;top:721px;width:183px;height:45px;"></div>
<div style="left:445px;top:721px;width:116px;height:1px;background:#fff;"></div>
<div class="t f" style="left:446.6px;top:715.8px;font-size:11.5px;transform:scaleX(0.9352);transform-origin:0 0;">Inclusão do lançamento</div>
<div class="t f" style="left:446.9px;top:731.8px;font-size:11.5px;transform:scaleX(0.9644);transform-origin:0 0;">24/08/2020 MARIANGELA MI</div>
<div class="t f" style="left:446.9px;top:747.8px;font-size:11.5px;transform:scaleX(1.0181);transform-origin:0 0;">28/08/2020</div>
<div style="left:0px;top:762px;width:975px;height:3px;background:#fff;"></div>
<div style="left:0px;top:762.6px;width:975px;height:1.2px;background:#8a8a8a;"></div>
<div style="left:0px;top:764px;width:975px;height:1px;background:#ececec;"></div>
</div>
</body></html>
